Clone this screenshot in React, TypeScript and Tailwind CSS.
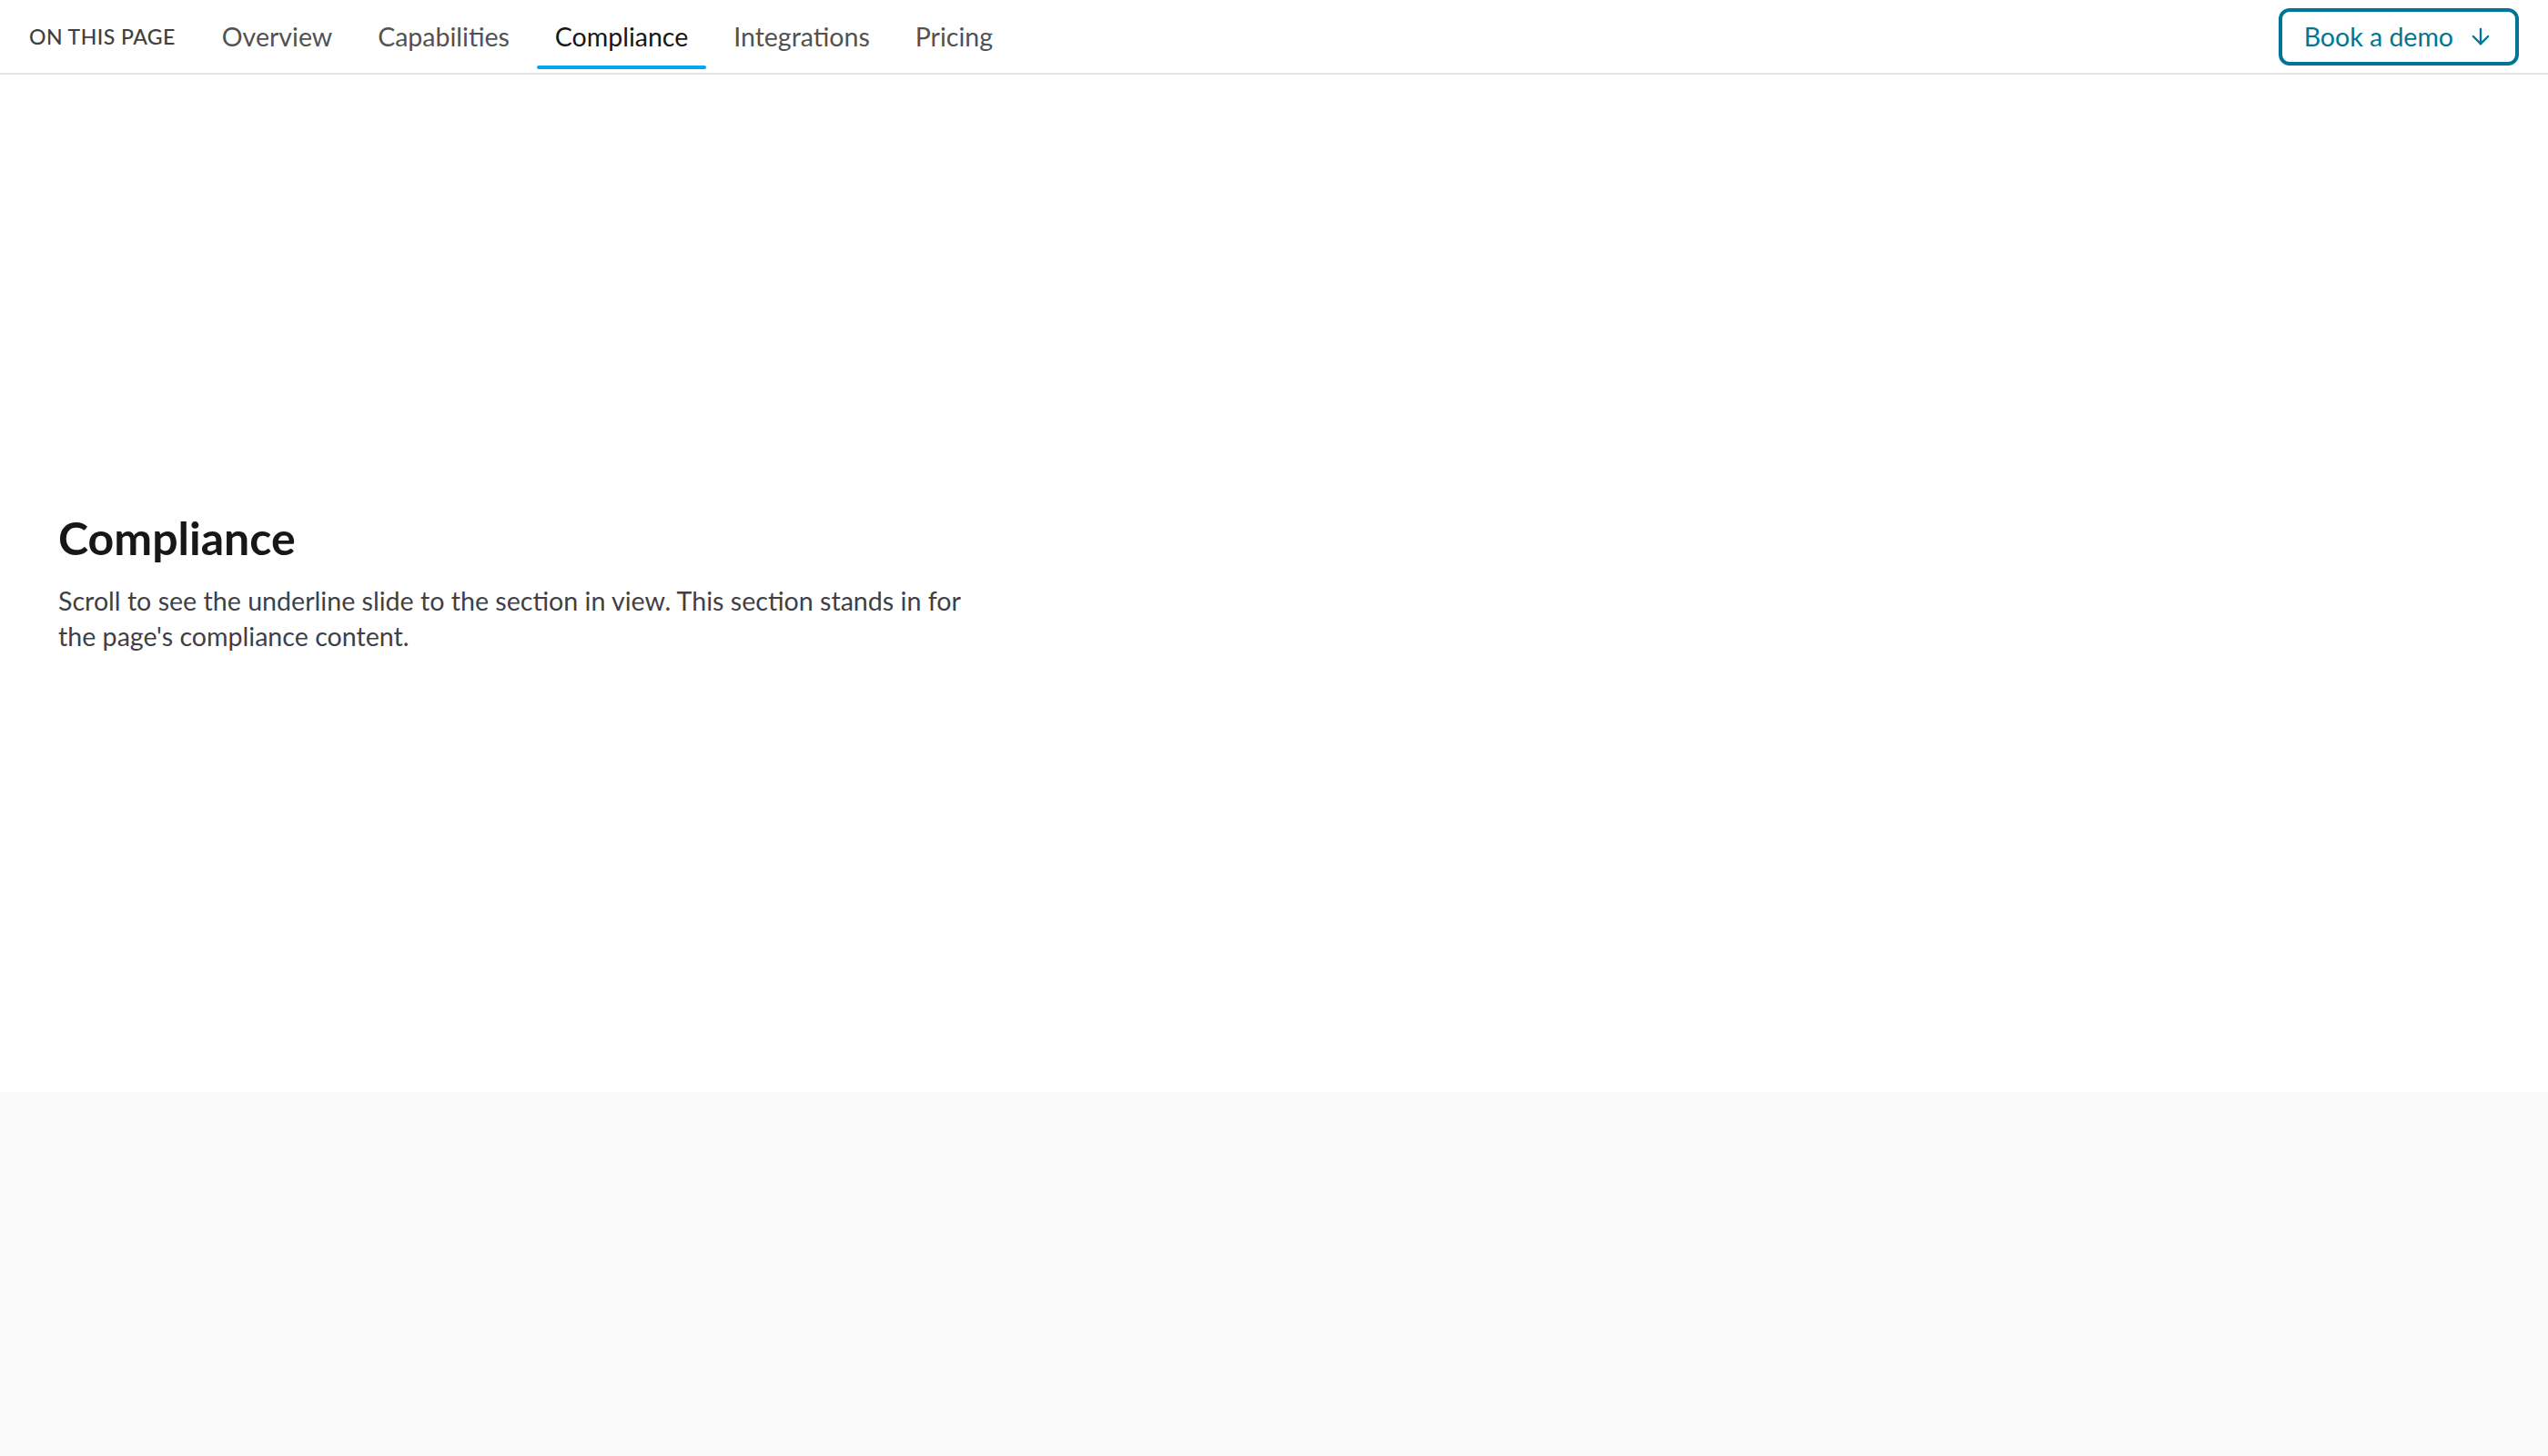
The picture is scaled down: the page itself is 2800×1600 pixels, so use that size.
import React, { useState } from 'react';
import { ArrowDown } from 'lucide-react';

const sections = ['Overview', 'Capabilities', 'Compliance', 'Integrations', 'Pricing'];

const App = () => {
  const [active, setActive] = useState('Compliance');

  return (
    <div className="min-h-screen bg-[#fafafa] font-['Lato','Noto_Sans',sans-serif] text-neutral-900">
      <header className="flex h-[82px] items-center border-b-2 border-zinc-200 bg-white px-8">
        <span className="text-[23px] font-medium uppercase tracking-[0.02em] text-neutral-700">
          On this page
        </span>
        <nav className="ml-[31px] flex h-full items-center gap-[10px]">
          {sections.map((s) => (
            <button
              key={s}
              type="button"
              onClick={() => setActive(s)}
              className={`relative flex h-full items-center px-5 text-[28.5px] ${
                active === s ? 'text-neutral-900' : 'text-neutral-600 hover:text-neutral-900'
              }`}
            >
              {s}
              {active === s && (
                <span className="absolute bottom-[4px] left-0 right-0 h-[4px] rounded-full bg-sky-500" />
              )}
            </button>
          ))}
        </nav>
        <button
          type="button"
          className="ml-auto flex h-[63px] items-center gap-4 rounded-xl border-4 border-cyan-700 px-6 text-[28.5px] text-cyan-700 hover:bg-cyan-50"
        >
          Book a demo
          <ArrowDown className="h-7 w-7" strokeWidth={2} />
        </button>
      </header>

      <section className="flex h-[1118px] items-center bg-white px-16">
        <div>
          <h2 className="mb-5 text-[50px] font-bold leading-[1.15] text-neutral-900">Compliance</h2>
          <p className="max-w-[1020px] text-[28.6px] leading-[39px] text-zinc-700">
            Scroll to see the underline slide to the section in view. This section stands in for the
            page's compliance content.
          </p>
        </div>
      </section>

      <section className="h-[400px] bg-[#fafafa]" />
    </div>
  );
};

export default App;
